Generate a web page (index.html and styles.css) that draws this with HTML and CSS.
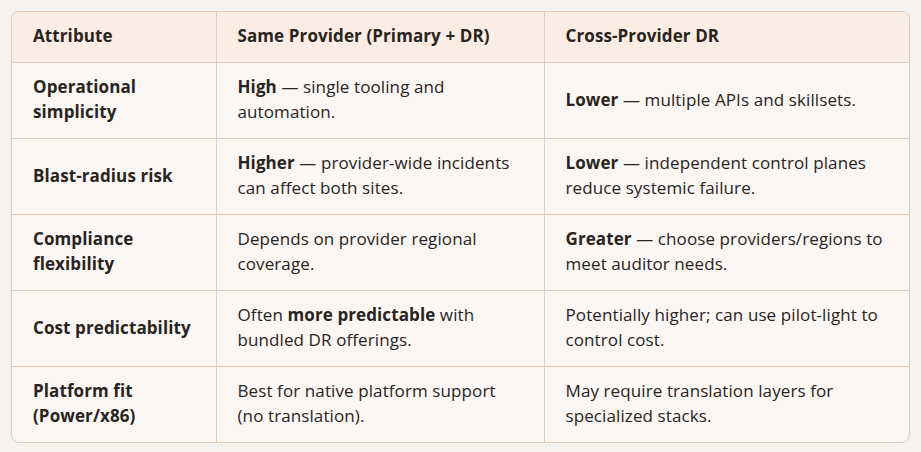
FILE: index.html
```html
<!DOCTYPE html>
<html>
<head>
<meta charset="utf-8">
<link rel="stylesheet" href="styles.css">
</head>
<body>
<div class="wrap">
<table class="cmp">
<colgroup><col class="c1"><col class="c2"><col class="c3"></colgroup>
<thead>
<tr><th>Attribute</th><th>Same Provider (Primary + DR)</th><th>Cross-Provider DR</th></tr>
</thead>
<tbody>
<tr><td class="attr">Operational simplicity</td><td><b>High</b> — single tooling and automation.</td><td><b>Lower</b> — multiple APIs and skillsets.</td></tr>
<tr><td class="attr">Blast-radius risk</td><td><b>Higher</b> — provider-wide incidents can affect both sites.</td><td><b>Lower</b> — independent control planes reduce systemic failure.</td></tr>
<tr><td class="attr">Compliance flexibility</td><td>Depends on provider regional coverage.</td><td><b>Greater</b> — choose providers/regions to meet auditor needs.</td></tr>
<tr><td class="attr">Cost predictability</td><td>Often <b>more predictable</b> with bundled DR offerings.</td><td>Potentially higher; can use pilot-light to control cost.</td></tr>
<tr><td class="attr">Platform fit (Power/x86)</td><td>Best for native platform support (no translation).</td><td>May require translation layers for specialized stacks.</td></tr>
</tbody>
</table>
</div>
</body>
</html>
```
FILE: styles.css
```css
html, body { margin: 0; padding: 0; background: #f5f2ef; }
body { padding: 11px; font-family: "Open Sans", "Noto Sans", sans-serif; color: #2a2421; }
.wrap { width: 899px; border: 1px solid #e2cbbb; border-radius: 8px; overflow: hidden; background: #faf6f3; box-sizing: border-box; }
.cmp { width: 100%; border-collapse: collapse; table-layout: fixed; font-size: 17px; line-height: 25px; letter-spacing: 0.1px; }
.c1 { width: 204px; }
.c2 { width: 328px; }
.c3 { width: auto; }
th, td { text-align: left; vertical-align: middle; padding: 11px 21px 14px; border-right: 1px solid #e2cbbb; border-bottom: 1px solid #e2cbbb; }
th:last-child, td:last-child { border-right: none; }
tbody tr:last-child td { border-bottom: none; }
thead th { background: #fbede4; font-weight: 700; }
td { height: 50px; font-weight: 400; }
td.attr, b { font-weight: 700; }
```
